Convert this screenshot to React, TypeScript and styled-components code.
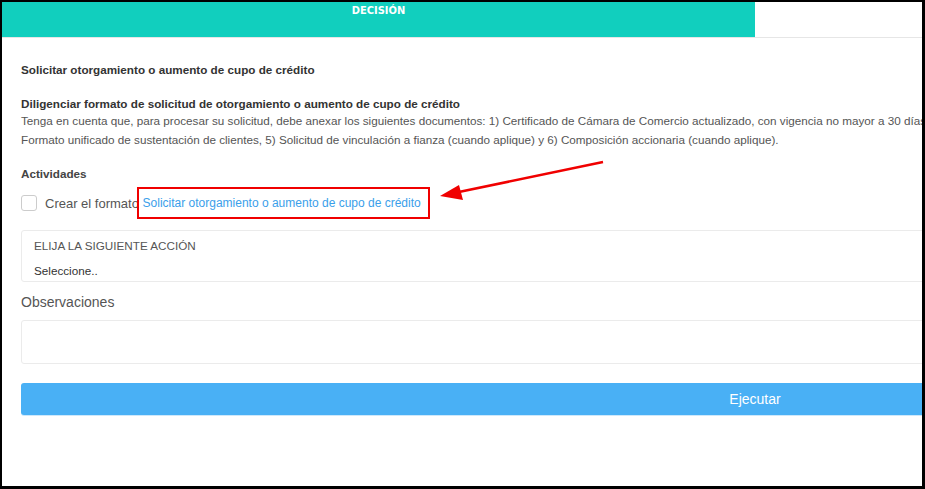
import React from "react";
import styled, { createGlobalStyle } from "styled-components";

const GlobalStyle = createGlobalStyle`
  html, body {
    margin: 0;
    padding: 0;
    background: #ffffff;
  }
  body {
    font-family: "Liberation Sans", Arial, sans-serif;
  }
`;

const Frame = styled.div`
  position: relative;
  box-sizing: border-box;
  width: 925px;
  height: 489px;
  border-style: solid;
  border-color: #000000;
  border-width: 2px 3px 3px 2px;
  background: #ffffff;
  overflow: hidden;
`;

const Inner = styled.div`
  width: 1506px;
`;

const TabBar = styled.div`
  display: flex;
  border-bottom: 1px solid #e6e6e6;
`;

const Tab = styled.div<{ $active?: boolean }>`
  flex: 1;
  height: 35px;
  box-sizing: border-box;
  padding-top: 2px;
  text-align: center;
  background: ${(p) => (p.$active ? "#11cfbe" : "#ffffff")};
  color: #ffffff;
  font-family: "DejaVu Sans Condensed", "DejaVu Sans", sans-serif;
  font-weight: bold;
  font-size: 11px;
  line-height: 14px;
`;

const Content = styled.div`
  padding: 25px 19px 0 19px;
  display: flex;
  flex-direction: column;
`;

const Title = styled.div`
  font-size: 11.7px;
  line-height: 14px;
  font-weight: bold;
  color: #333333;
  margin-bottom: 20px;
`;

const SubTitle = styled.div`
  font-size: 11.7px;
  line-height: 14px;
  font-weight: bold;
  color: #333333;
`;

const Body = styled.div`
  font-size: 11.7px;
  line-height: 19px;
  color: #555555;
  margin-bottom: 18px;
`;

const Line = styled.span`
  display: block;
  white-space: nowrap;
`;

const Section = styled.div`
  font-size: 11.7px;
  line-height: 14px;
  font-weight: bold;
  color: #444444;
  margin-bottom: 6px;
`;

const CheckRow = styled.div`
  display: flex;
  align-items: center;
  height: 32px;
  margin-bottom: 11px;
`;

const Check = styled.span`
  box-sizing: border-box;
  width: 16px;
  height: 16px;
  border: 1px solid #cccccc;
  border-radius: 3px;
  background: #ffffff;
  margin-right: 8px;
`;

const CheckLabel = styled.span`
  font-size: 13px;
  color: #555555;
  white-space: pre;
`;

const Link = styled.span`
  position: relative;
  font-size: 12px;
  color: #3aa0ea;

  &::after {
    content: "";
    position: absolute;
    top: -9px;
    bottom: -9px;
    left: -6px;
    right: -9px;
    border: 2px solid #f00000;
  }
`;

const SelectBox = styled.div`
  box-sizing: border-box;
  height: 52px;
  border: 1px solid #ebebeb;
  border-radius: 3px;
  padding: 8px 12px 0 12px;
  display: flex;
  flex-direction: column;
  gap: 11px;
  overflow: hidden;
  margin-bottom: 11px;
`;

const SelectLabel = styled.span`
  font-size: 11.7px;
  line-height: 14px;
  color: #555555;
  text-transform: uppercase;
`;

const SelectValue = styled.span`
  font-size: 11.7px;
  line-height: 14px;
  color: #333333;
`;

const FieldLabel = styled.div`
  font-size: 14px;
  line-height: 18px;
  color: #555555;
  margin-bottom: 9px;
`;

const TextArea = styled.textarea`
  box-sizing: border-box;
  height: 44px;
  border: 1px solid #ebebeb;
  border-radius: 3px;
  resize: none;
  outline: none;
  margin: 0 0 19px 0;
  display: block;
`;

const Button = styled.button`
  height: 32px;
  border: none;
  border-radius: 3px;
  background: #49b0f5;
  box-shadow: 0 1px 0 #cde8fb;
  color: #ffffff;
  font-family: "Liberation Sans", Arial, sans-serif;
  font-size: 14px;
  cursor: pointer;
`;

const Arrow = styled.svg`
  position: absolute;
  left: 0;
  top: 0;
  pointer-events: none;
`;

const App = () => {
  return (
    <>
      <GlobalStyle />
      <Frame>
        <Inner>
          <TabBar>
            <Tab $active>DECISIÓN</Tab>
            <Tab />
          </TabBar>
          <Content>
            <Title>Solicitar otorgamiento o aumento de cupo de crédito</Title>
            <SubTitle>
              Diligenciar formato de solicitud de otorgamiento o aumento de cupo de crédito
            </SubTitle>
            <Body>
              <Line>
                Tenga en cuenta que, para procesar su solicitud, debe anexar los siguientes
                documentos: 1) Certificado de Cámara de Comercio actualizado, con vigencia no
                mayor a 30 días, 2) RUT actualizado, 3) Estados financieros del último año, 4)
              </Line>
              <Line>
                Formato unificado de sustentación de clientes, 5) Solicitud de vinculación a
                fianza (cuando aplique) y 6) Composición accionaria (cuando aplique).
              </Line>
            </Body>
            <Section>Actividades</Section>
            <CheckRow>
              <Check />
              <CheckLabel>Crear el formato </CheckLabel>
              <Link>Solicitar otorgamiento o aumento de cupo de crédito</Link>
            </CheckRow>
            <SelectBox>
              <SelectLabel>Elija la siguiente acción</SelectLabel>
              <SelectValue>Seleccione..</SelectValue>
            </SelectBox>
            <FieldLabel>Observaciones</FieldLabel>
            <TextArea />
            <Button>Ejecutar</Button>
          </Content>
        </Inner>
        <Arrow width="925" height="489" viewBox="0 0 925 489">
          <line x1="601" y1="160" x2="452" y2="191" stroke="#f00000" strokeWidth="2.5" />
          <polygon points="438,194 457,183 461,198" fill="#f00000" />
        </Arrow>
      </Frame>
    </>
  );
};

export default App;
